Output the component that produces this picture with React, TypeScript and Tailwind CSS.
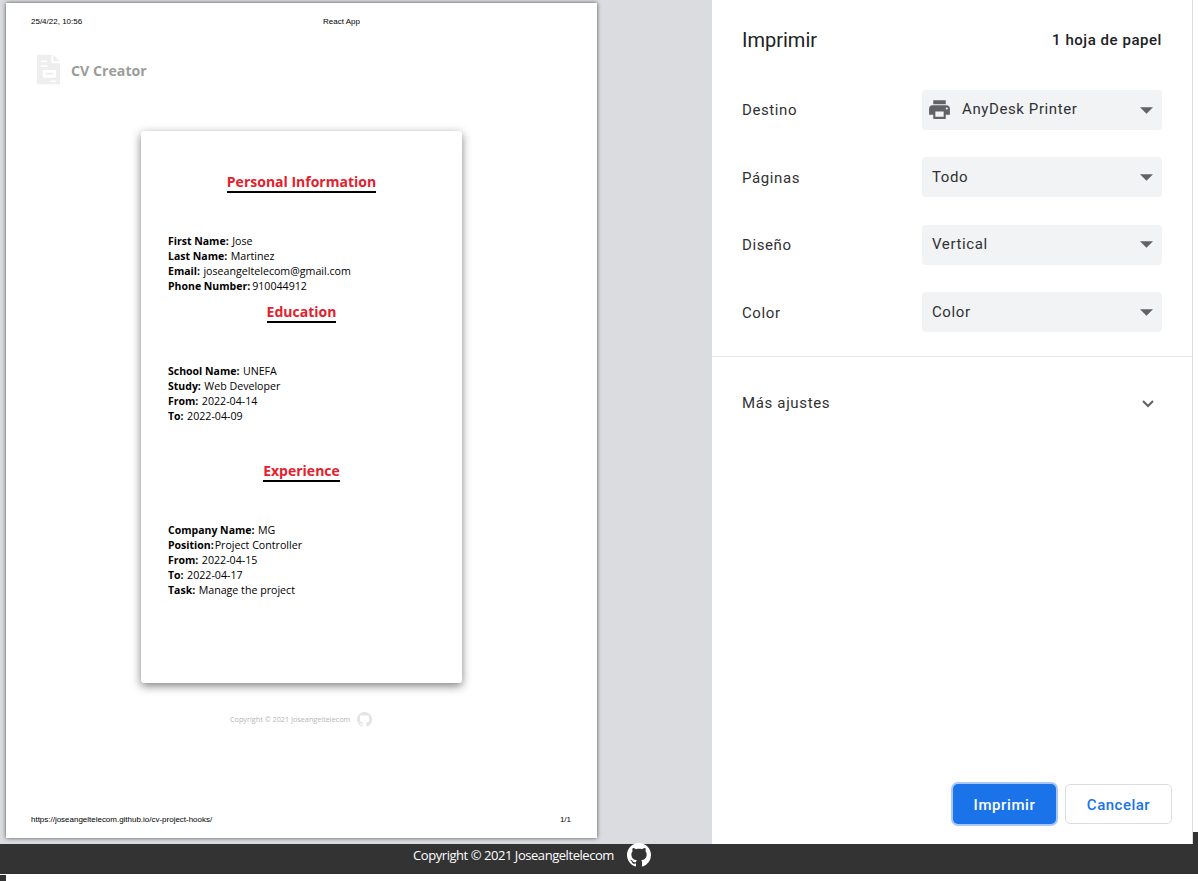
import React from "react";

const roboto = { fontFamily: "Roboto, sans-serif" };

function Github({ className }: { className: string }) {
  return (
    <svg viewBox="0 0 16 16" fill="currentColor" className={className}>
      <path d="M8 0C3.58 0 0 3.58 0 8c0 3.54 2.29 6.53 5.47 7.59.4.07.55-.17.55-.38 0-.19-.01-.82-.01-1.49-2.01.37-2.53-.49-2.69-.94-.09-.23-.48-.94-.82-1.13-.28-.15-.68-.52-.01-.53.63-.01 1.08.58 1.23.82.72 1.21 1.87.87 2.33.66.07-.52.28-.87.51-1.07-1.78-.2-3.64-.89-3.64-3.95 0-.87.31-1.59.82-2.15-.08-.2-.36-1.02.08-2.12 0 0 .67-.21 2.2.82.64-.18 1.32-.27 2-.27s1.36.09 2 .27c1.53-1.04 2.2-.82 2.2-.82.44 1.1.16 1.92.08 2.12.51.56.82 1.27.82 2.15 0 3.07-1.87 3.75-3.65 3.95.29.25.54.73.54 1.48 0 1.07-.01 1.93-.01 2.2 0 .21.15.46.55.38A8.01 8.01 0 0 0 16 8c0-4.42-3.58-8-8-8z" />
    </svg>
  );
}

function Line({ k, v, gap = "mr-[3.5px]" }: { k: string; v: string; gap?: string }) {
  return (
    <div className="flex h-[15px] items-center whitespace-nowrap">
      <b className={`${gap} font-bold`}>{k}</b>
      <span className="text-[10.65px]">{v}</span>
    </div>
  );
}

function Heading({ children }: { children: string }) {
  return (
    <div className="flex justify-center">
      <span className="border-b-2 border-black text-[14px] leading-[19px] font-bold text-[#e3202c]">{children}</span>
    </div>
  );
}

function Select({ label, value, icon }: { label: string; value: string; icon?: boolean }) {
  return (
    <div className="flex h-10 items-center">
      <span className="mt-[1.4px] w-[180px] text-[15px] tracking-[0.6px] text-[#303134]">{label}</span>
      <div className="flex h-10 w-[240px] items-center rounded-[4px] bg-[#f1f3f4] pr-[9px] pl-[10px]">
        {icon && (
          <svg viewBox="0 0 24 24" fill="#5f6368" className="mr-[5px] h-[25px] w-[25px] -translate-x-[5px] -translate-y-[1px]">
            <path d="M19 8H5c-1.66 0-3 1.34-3 3v6h4v4h12v-4h4v-6c0-1.66-1.34-3-3-3zm-3 11H8v-5h8v5zm3-7c-.55 0-1-.45-1-1s.45-1 1-1 1 .45 1 1-.45 1-1 1zm-1-9H6v4h12V3z" />
          </svg>
        )}
        <span className="-mt-[0.8px] flex-1 text-[15px] tracking-[0.6px] text-[#303134]">{value}</span>
        <svg viewBox="0 0 14 7" fill="#5f6368" className="h-[7px] w-[13px]">
          <path d="M0 0h14L7 7z" />
        </svg>
      </div>
    </div>
  );
}

export default function App() {
  return (
    <div className="flex h-[881px] flex-col overflow-hidden bg-white">
      <div className="flex h-[844px] items-stretch bg-[#dadce0]">
        <div className="w-[711px] shrink-0 pt-[3px] pl-[6px]">
          <div className="flex h-[835px] w-[591px] flex-col bg-white shadow-[0_0_4px_rgba(0,0,0,0.65)]">
            <div className="flex h-[36px] items-center px-[25px] pt-[1px] text-[8px] text-black" style={{ fontFamily: "'Liberation Sans', sans-serif" }}>
              <span className="w-[292px]">25/4/22, 10:56</span>
              <span>React App</span>
            </div>
            <div className="mt-[14px] flex h-[32px] items-center pl-[31px]">
              <svg viewBox="0 0 24 31" fill="#eeeeee" className="h-[31px] w-[23px]">
                <path fillRule="evenodd" d="M1 0h14v9h9v21a1 1 0 0 1-1 1H1a1 1 0 0 1-1-1V1a1 1 0 0 1 1-1zM4 6v2h7V6zm0 5v2h7v-2zm3 5a1 1 0 0 0-1 1v6a1 1 0 0 0 1 1h12a1 1 0 0 0 1-1v-6a1 1 0 0 0-1-1zm2 3h8v2H9zm5 8v1.500h6V27zM17 0l7 7h-7z" />
              </svg>
              <span className="mt-[4px] ml-[11px] text-[14.2px] font-bold text-[#9c9c9c]" style={{ fontFamily: "'Open Sans', sans-serif" }}>CV Creator</span>
            </div>
            <div className="ml-[135px] mt-[46px] h-[552px] w-[321px] rounded-[3px] bg-white px-[27px] pt-[41px] text-[10.5px] leading-[15px] text-black shadow-[0_3px_10px_rgba(0,0,0,0.5)]" style={{ fontFamily: "'Open Sans', sans-serif" }}>
              <Heading>Personal Information</Heading>
              <div className="mt-[41px]">
                <Line k="First Name:" v="Jose" />
                <Line k="Last Name:" v="Martinez" />
                <Line k="Email:" v="joseangeltelecom@gmail.com" />
                <Line k="Phone Number:" v="910044912" gap="mr-[2px]" />
              </div>
              <div className="mt-[8px]"><Heading>Education</Heading></div>
              <div className="mt-[41px]">
                <Line k="School Name:" v="UNEFA" />
                <Line k="Study:" v="Web Developer" />
                <Line k="From:" v="2022-04-14" />
                <Line k="To:" v="2022-04-09" />
              </div>
              <div className="mt-[37px]"><Heading>Experience</Heading></div>
              <div className="mt-[41px]">
                <Line k="Company Name:" v="MG" />
                <Line k="Position:" v="Project Controller" gap="mr-[1px]" />
                <Line k="From:" v="2022-04-15" />
                <Line k="To:" v="2022-04-17" />
                <Line k="Task:" v="Manage the project" />
              </div>
            </div>
            <div className="mt-[26px] flex h-[20px] items-center pl-[224px] text-[7.25px] text-[#b5b5b5]" style={{ fontFamily: "'Open Sans', sans-serif" }}>
              <span>Copyright © 2021 Joseangeltelecom</span>
              <Github className="ml-[7px] h-[15px] w-[15px] text-[#e4e4e4]" />
            </div>
            <div className="mt-auto flex h-[36px] items-center justify-between px-[25px] pb-[1px] text-[7.97px] text-black" style={{ fontFamily: "'Liberation Sans', sans-serif" }}>
              <span>https://joseangeltelecom.github.io/cv-project-hooks/</span>
              <span className="mr-[1px]">1/1</span>
            </div>
          </div>
        </div>
        <div className="flex w-[482px] shrink-0 flex-col border-x border-[#dadce0] bg-white" style={roboto}>
          <div className="flex h-[80px] items-center justify-between pr-[30px] pl-[30px]">
            <span className="text-[20px] text-[#202124]">Imprimir</span>
            <span className="text-[15px] font-medium tracking-[0.55px] text-[#202124]">1 hoja de papel</span>
          </div>
          <div className="flex flex-col gap-[27.4px] pt-[10px] pl-[30px]">
            <Select label="Destino" value="AnyDesk Printer" icon />
            <Select label="Páginas" value="Todo" />
            <Select label="Diseño" value="Vertical" />
            <Select label="Color" value="Color" />
          </div>
          <div className="mt-[24px] h-px bg-[#e8eaed]" />
          <div className="flex h-[93px] items-center justify-between pr-[38px] pl-[30px]">
            <span className="text-[15px] tracking-[0.65px] text-[#303134]">Más ajustes</span>
            <svg viewBox="0 0 12 8" fill="none" stroke="#5f6368" strokeWidth="2" className="h-[8px] w-[12px]">
              <path d="M1 1l5 5 5-5" />
            </svg>
          </div>
          <div className="mt-auto flex items-center justify-end gap-[9px] pr-[20px] pb-[20px]">
            <button className="h-[40px] w-[103px] rounded-[5px] bg-[#1a73e8] pt-[2px] text-[15px] font-medium tracking-[0.6px] text-white ring-2 ring-[#a8c7fa]">Imprimir</button>
            <button className="h-[40px] w-[107px] rounded-[5px] border border-[#dadce0] bg-white pt-[2px] text-[15px] font-medium tracking-[0.5px] text-[#1a73e8]">Cancelar</button>
          </div>
        </div>
        <div className="flex flex-1 flex-col bg-white">
          <div className="mt-auto h-[12px] bg-[#333333]" />
        </div>
      </div>
      <div className="flex h-[30px] items-center justify-center bg-[#333333] pr-[134px] pb-[8px] text-[13px] text-white" style={{ fontFamily: "'Open Sans', sans-serif" }}>
        <span className="mt-[2px] tracking-[-0.45px]">Copyright © 2021 Joseangeltelecom</span>
        <Github className="ml-[13px] h-[24px] w-[24px]" />
      </div>
      <div className="h-px" />
      <div className="h-[6px] w-[6px] bg-[#333333]" />
    </div>
  );
}
